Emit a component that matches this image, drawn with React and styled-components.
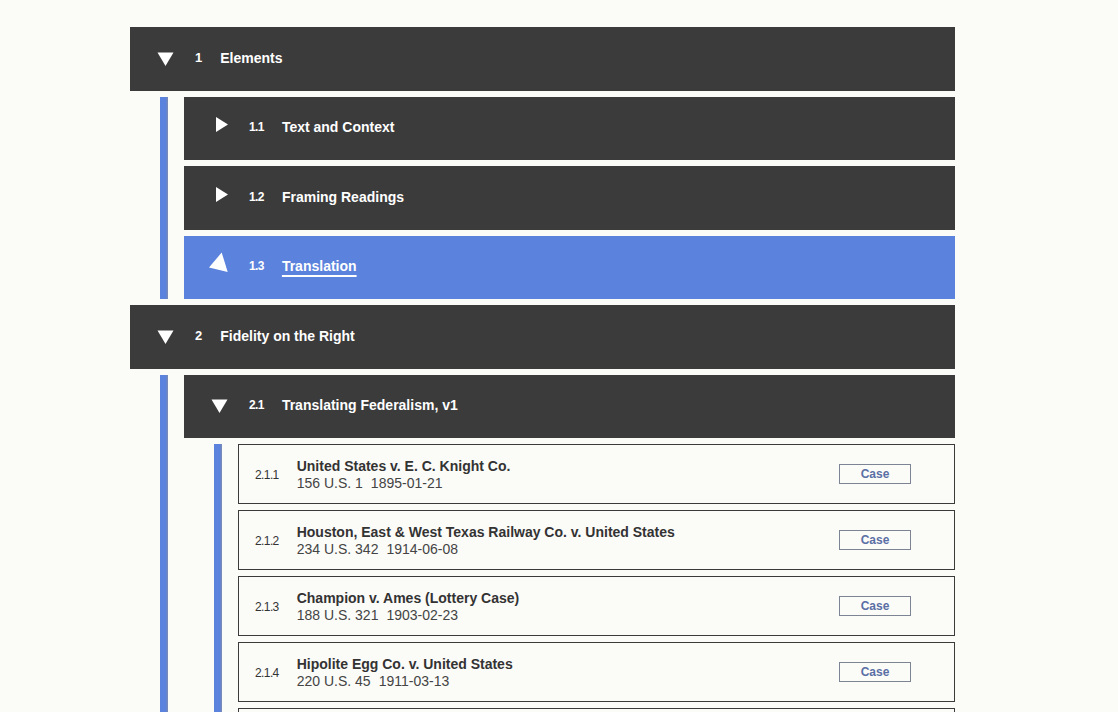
import React from 'react';
import styled, { createGlobalStyle } from 'styled-components';

const GlobalStyle = createGlobalStyle`
  html, body {
    margin: 0;
    padding: 0;
    height: 712px;
    overflow: hidden;
    background: #fbfbf8;
    font-family: "Liberation Sans", Arial, sans-serif;
  }
`;

const outline = [
  {
    num: '1',
    title: 'Elements',
    open: true,
    children: [
      { num: '1.1', title: 'Text and Context', icon: 'right' },
      { num: '1.2', title: 'Framing Readings', icon: 'right' },
      { num: '1.3', title: 'Translation', icon: 'turning', active: true },
    ],
  },
  {
    num: '2',
    title: 'Fidelity on the Right',
    open: true,
    children: [
      {
        num: '2.1',
        title: 'Translating Federalism, v1',
        open: true,
        cases: [
          { num: '2.1.1', title: 'United States v. E. C. Knight Co.', cite: '156 U.S. 1', date: '1895-01-21' },
          { num: '2.1.2', title: 'Houston, East & West Texas Railway Co. v. United States', cite: '234 U.S. 342', date: '1914-06-08' },
          { num: '2.1.3', title: 'Champion v. Ames (Lottery Case)', cite: '188 U.S. 321', date: '1903-02-23' },
          { num: '2.1.4', title: 'Hipolite Egg Co. v. United States', cite: '220 U.S. 45', date: '1911-03-13' },
          { num: '2.1.5', title: 'Hammer v. Dagenhart', cite: '247 U.S. 251', date: '1918-06-03' },
        ],
      },
    ],
  },
];

function Triangle({ kind }) {
  if (kind === 'right') {
    return (
      <Icon viewBox="0 0 18 18">
        <polygon points="5,-2 17,5.5 5,13" fill="#fff" />
      </Icon>
    );
  }
  if (kind === 'turning') {
    return (
      <Icon viewBox="0 0 18 18">
        <polygon points="10.7,-5.5 -2,9.5 16.7,14" fill="#fff" />
      </Icon>
    );
  }
  return (
    <Icon viewBox="0 0 18 18">
      <polygon points="0.5,2.5 16.5,2.5 8.5,16" fill="#fff" />
    </Icon>
  );
}

function CaseCard({ item }) {
  return (
    <Card>
      <CaseNum>{item.num}</CaseNum>
      <CaseText>
        <CaseTitle>{item.title}</CaseTitle>
        <Cite>
          <span>{item.cite}</span>
          <span>{item.date}</span>
        </Cite>
      </CaseText>
      <CaseBtn>Case</CaseBtn>
    </Card>
  );
}

function Node({ node }) {
  const hasKids = node.open && (node.children || node.cases);
  return (
    <>
      <Row $active={node.active}>
        <Triangle kind={node.icon || 'down'} />
        <Num $small={node.num.includes('.')}>{node.num}</Num>
        <Title $active={node.active}>{node.title}</Title>
      </Row>
      {hasKids && (
        <Children>
          <Bar />
          <List>
            {node.children && node.children.map((c) => <Node key={c.num} node={c} />)}
            {node.cases && node.cases.map((c) => <CaseCard key={c.num} item={c} />)}
          </List>
        </Children>
      )}
    </>
  );
}

export default function App() {
  return (
    <>
      <GlobalStyle />
      <Page>
        <List>
          {outline.map((n) => <Node key={n.num} node={n} />)}
        </List>
      </Page>
    </>
  );
}

const Page = styled.div`
  padding-top: 27px;
  margin-left: 130px;
  width: 825px;
`;

const List = styled.div`
  display: flex;
  flex-direction: column;
  gap: 6px;
  flex: 1;
  min-width: 0;
`;

const Row = styled.div`
  display: flex;
  align-items: center;
  height: 63.5px;
  flex-shrink: 0;
  background: ${(p) => (p.$active ? '#5b82dc' : '#3b3b3b')};
  color: #fff;
  padding: 0 0 2px 27px;
  box-sizing: border-box;
`;

const Icon = styled.svg`
  width: 18px;
  height: 18px;
  overflow: visible;
  flex-shrink: 0;
  margin-top: 2px;
`;

const Num = styled.span`
  margin-left: 20px;
  font-size: ${(p) => (p.$small ? '12px' : '13px')};
  font-weight: 700;
  letter-spacing: ${(p) => (p.$small ? '-0.6px' : '0')};
`;

const Title = styled.span`
  margin-left: 18px;
  font-size: 14px;
  font-weight: 700;
  text-decoration: ${(p) => (p.$active ? 'underline' : 'none')};
  text-decoration-thickness: 2px;
  text-underline-offset: 4px;
`;

const Children = styled.div`
  display: flex;
  padding-left: 30px;
  gap: 16px;
`;

const Bar = styled.div`
  width: 8px;
  flex-shrink: 0;
  background: linear-gradient(to right, #5b82dc 70%, #7d8bb0);
`;

const Card = styled.div`
  display: flex;
  align-items: center;
  height: 60px;
  flex-shrink: 0;
  box-sizing: border-box;
  border: 1px solid #3b3b3b;
  padding: 0 43px 0 16px;
  color: #333;
`;

const CaseNum = styled.span`
  font-size: 12px;
  letter-spacing: -0.6px;
  color: #333;
  margin-right: 18px;
  padding-top: 2px;
`;

const CaseText = styled.div`
  display: flex;
  flex-direction: column;
  flex: 1;
  gap: 1px;
`;

const CaseTitle = styled.span`
  font-size: 14px;
  font-weight: 700;
  color: #333;
`;

const Cite = styled.div`
  font-size: 14px;
  color: #444;
  display: flex;
  gap: 8px;
`;

const CaseBtn = styled.button`
  width: 72px;
  height: 20px;
  box-sizing: border-box;
  border: 1px solid #7d8595;
  background: transparent;
  color: #5a6fa5;
  font-family: "Liberation Sans", Arial, sans-serif;
  font-size: 12px;
  font-weight: 700;
  padding: 0;
  cursor: pointer;
`;
